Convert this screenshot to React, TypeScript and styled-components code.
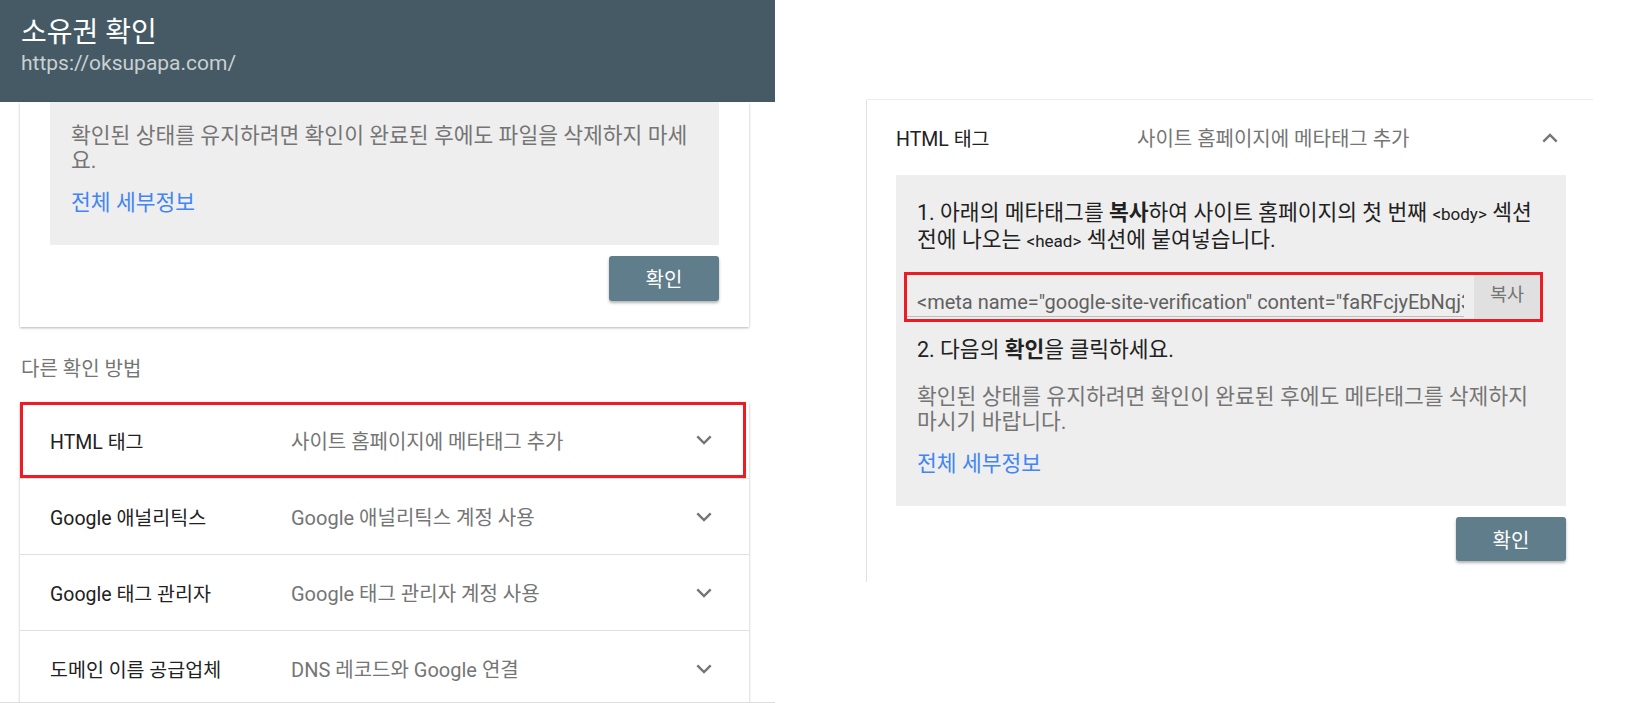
import { FC } from "react";
import { styled, createGlobalStyle } from "styled-components";

const GlobalStyle = createGlobalStyle`
  html, body {
    margin: 0;
    padding: 0;
    background: #ffffff;
  }
  body {
    font-family: Roboto, "Noto Sans CJK KR", sans-serif;
    color: #212121;
  }
`;

const methods = [
  { name: "HTML 태그", desc: "사이트 홈페이지에 메타태그 추가", marked: true },
  { name: "Google 애널리틱스", desc: "Google 애널리틱스 계정 사용", marked: false },
  { name: "Google 태그 관리자", desc: "Google 태그 관리자 계정 사용", marked: false },
  { name: "도메인 이름 공급업체", desc: "DNS 레코드와 Google 연결", marked: false },
];

const Chevron: FC<{ up?: boolean }> = ({ up }) => (
  <svg width="16" height="10" viewBox="0 0 16 10">
    <path
      d={up ? "M1.3 8.6 L8 2 L14.7 8.6" : "M1.3 1.4 L8 8 L14.7 1.4"}
      fill="none"
      stroke="#757575"
      strokeWidth="2.4"
    />
  </svg>
);

const App: FC = () => {
  return (
    <>
      <GlobalStyle />
      <Page>
        <LeftPane>
          <Header>
            <Title>소유권 확인</Title>
            <SiteUrl>https://oksupapa.com/</SiteUrl>
          </Header>

          <LeftBody>
            <Card>
              <NoteBox>
                <Note>
                  확인된 상태를 유지하려면 확인이 완료된 후에도 파일을 삭제하지 마세
                  <br />
                  요.
                </Note>
                <Link>전체 세부정보</Link>
              </NoteBox>
              <ActionRow>
                <ConfirmButton>확인</ConfirmButton>
              </ActionRow>
            </Card>

            <SectionLabel>다른 확인 방법</SectionLabel>

            <MethodList>
              {methods.map((m, i) => (
                <MethodRow key={m.name} $first={i === 0} $marked={m.marked}>
                  <MethodName>{m.name}</MethodName>
                  <MethodDesc>{m.desc}</MethodDesc>
                  <Chevron />
                </MethodRow>
              ))}
            </MethodList>
          </LeftBody>
        </LeftPane>

        <RightPane>
          <ExpandedCard>
            <ExpandedHead>
              <MethodName>HTML 태그</MethodName>
              <MethodDesc>사이트 홈페이지에 메타태그 추가</MethodDesc>
              <Chevron up />
            </ExpandedHead>

            <DetailBox>
              <Step>
                1. 아래의 메타태그를 <b>복사</b>하여 사이트 홈페이지의 첫 번째{" "}
                <Code>&lt;body&gt;</Code> 섹션
                <br />
                전에 나오는 <Code>&lt;head&gt;</Code> 섹션에 붙여넣습니다.
              </Step>

              <CopyRow>
                <CodeField>
                  &lt;meta name="google-site-verification" content="faRFcjyEbNqj3
                </CodeField>
                <CopyButton>복사</CopyButton>
              </CopyRow>

              <Step $gap={15}>
                2. 다음의 <b>확인</b>을 클릭하세요.
              </Step>

              <Note $gap={22}>
                확인된 상태를 유지하려면 확인이 완료된 후에도 메타태그를 삭제하지
                <br />
                마시기 바랍니다.
              </Note>
              <Link>전체 세부정보</Link>
            </DetailBox>

            <ActionRow $inset={27}>
              <ConfirmButton $height={44}>확인</ConfirmButton>
            </ActionRow>
          </ExpandedCard>
        </RightPane>
      </Page>
    </>
  );
};

const Page = styled.div`
  display: flex;
  align-items: flex-start;
  width: 1639px;
  height: 703px;
  overflow: hidden;
`;

const LeftPane = styled.section`
  width: 775px;
  height: 703px;
  flex-shrink: 0;
  box-sizing: border-box;
  border-bottom: 1px solid #dcdcdc;
  display: flex;
  flex-direction: column;
  overflow: hidden;
`;

const Header = styled.header`
  height: 102px;
  flex-shrink: 0;
  box-sizing: border-box;
  background-color: #455a64;
  padding: 17px 21px 0;
`;

const Title = styled.div`
  color: #ffffff;
  font-size: 28px;
  line-height: 32px;
`;

const SiteUrl = styled.div`
  margin-top: 1px;
  color: rgba(255, 255, 255, 0.72);
  font-size: 21px;
  line-height: 26px;
`;

const LeftBody = styled.div`
  padding: 0 26px 0 20px;
`;

const Card = styled.div`
  background: #ffffff;
  box-shadow: 0 1px 2px rgba(0, 0, 0, 0.22), 0 1px 4px rgba(0, 0, 0, 0.08);
  padding: 0 30px 26px 30px;
`;

const NoteBox = styled.div`
  background: #eeeeee;
  padding: 21px 21px 30px;
`;

const Note = styled.p<{ $gap?: number }>`
  margin: ${(p) => p.$gap ?? 0}px 0 0;
  color: #757575;
  font-size: 21.5px;
  line-height: 25px;
  white-space: nowrap;
`;

const Link = styled.div`
  margin-top: 17px;
  color: #4285f4;
  font-size: 21.5px;
  line-height: 25px;
  cursor: pointer;
`;

const ActionRow = styled.div<{ $inset?: number }>`
  display: flex;
  justify-content: flex-end;
  padding-top: 11px;
  margin-right: ${(p) => p.$inset ?? 0}px;
`;

const ConfirmButton = styled.button<{ $height?: number }>`
  width: 110px;
  height: ${(p) => p.$height ?? 45}px;
  border: none;
  border-radius: 3px;
  background-color: #607d8b;
  color: #ffffff;
  font-family: inherit;
  font-size: 20px;
  box-shadow: 0 2px 3px rgba(0, 0, 0, 0.3);
  cursor: pointer;
`;

const SectionLabel = styled.div`
  margin: 30px 0 21px 1px;
  color: #757575;
  font-size: 20px;
  line-height: 24px;
`;

const MethodList = styled.div`
  background: #ffffff;
  box-shadow: 0 1px 2px rgba(0, 0, 0, 0.22), 0 1px 4px rgba(0, 0, 0, 0.08);
`;

const MethodRow = styled.div<{ $first: boolean; $marked: boolean }>`
  display: flex;
  align-items: center;
  height: ${(p) => (p.$first ? 76 : 75)}px;
  padding: 0 37px 0 30px;
  border-top: ${(p) => (p.$first ? "none" : "1px solid #e0e0e0")};
  outline: ${(p) => (p.$marked ? "3px solid #ed1c24" : "none")};
  outline-offset: -3px;
  margin-right: ${(p) => (p.$marked ? 3 : 0)}px;
  padding-right: ${(p) => (p.$marked ? 34 : 37)}px;
`;

const MethodName = styled.div`
  width: 241px;
  flex-shrink: 0;
  color: #212121;
  font-size: 19.5px;
`;

const MethodDesc = styled.div`
  flex: 1;
  color: #757575;
  font-size: 20px;
`;

const RightPane = styled.section`
  padding: 99px 0 0 91px;
`;

const ExpandedCard = styled.div`
  width: 727px;
  height: 483px;
  box-sizing: border-box;
  border-top: 1px solid #ececec;
  border-left: 1px solid #e0e0e0;
  border-top-left-radius: 2px;
`;

const ExpandedHead = styled.div`
  display: flex;
  align-items: center;
  height: 75px;
  padding: 0 35px 0 29px;
`;

const DetailBox = styled.div`
  background: #eeeeee;
  margin: 0 27px 0 29px;
  padding: 25px 21px 30px;
`;

const Step = styled.p<{ $gap?: number }>`
  margin: ${(p) => p.$gap ?? 0}px 0 0;
  color: #212121;
  font-size: 21.5px;
  line-height: 25px;
  white-space: nowrap;

  b {
    font-weight: 700;
  }
`;

const Code = styled.span`
  font-size: 17px;
`;

const CopyRow = styled.div`
  display: flex;
  height: 50px;
  box-sizing: border-box;
  margin: 18px 2px 0 -13px;
  border: 3px solid #ed1c24;
`;

const CodeField = styled.div`
  flex: 1;
  display: flex;
  align-items: flex-end;
  margin: 0 10px 2px 0;
  padding: 0 0 2px 10px;
  border-bottom: 1px solid #bdbdbd;
  color: #616161;
  font-size: 20px;
  line-height: 24px;
  white-space: nowrap;
  overflow: hidden;
`;

const CopyButton = styled.button`
  width: 66px;
  border: none;
  background: #e0e0e0;
  color: #757575;
  font-family: inherit;
  font-size: 18.5px;
  line-height: 24px;
  padding: 8px 0 0;
  display: flex;
  justify-content: center;
  align-items: flex-start;
`;

export default App;
